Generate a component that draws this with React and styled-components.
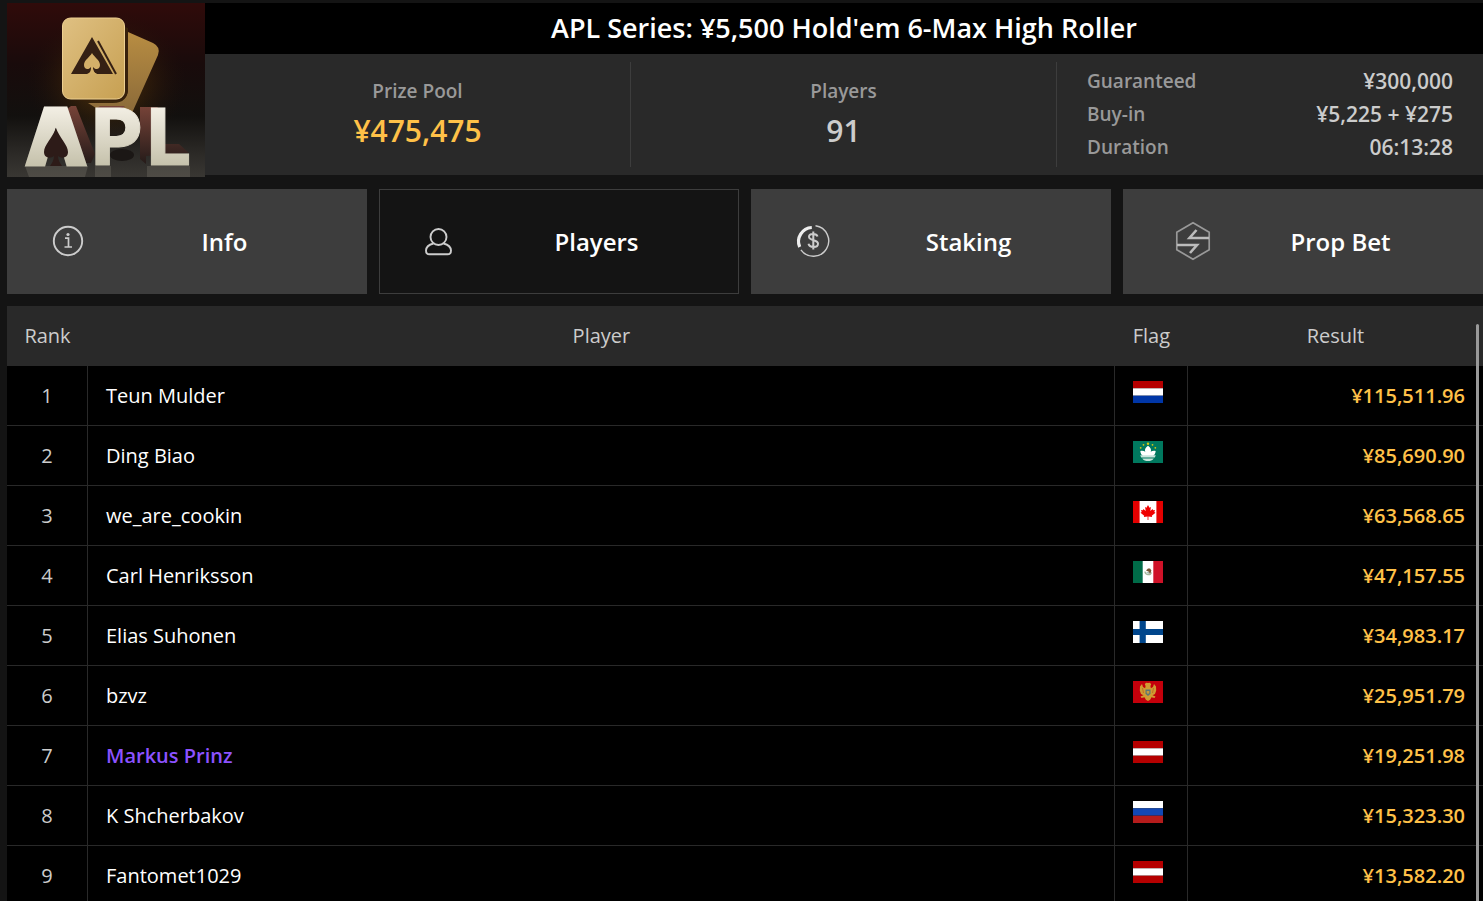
import React from 'react';
import styled, { createGlobalStyle } from 'styled-components';

const GlobalStyle = createGlobalStyle`
  * {
    box-sizing: border-box;
  }

  body {
    margin: 0;
    background: #141414;
    color: #fff;
    font-family: 'Open Sans', 'Noto Sans', sans-serif;
  }
`;

const Page = styled.main`
  display: flex;
  flex-direction: column;
  gap: 12px;
  height: 100vh;
  padding: 3px 0 0 7px;
  overflow: hidden;
`;

const Header = styled.header`
  display: flex;
  align-items: flex-start;
  flex-shrink: 0;
`;

const Logo = styled.svg`
  display: block;
  flex-shrink: 0;
  width: 198px;
  height: 174px;
  overflow: visible;
`;

const Summary = styled.div`
  flex: 1;
`;

const Title = styled.h1`
  margin: 0;
  padding-bottom: 1px;
  background: #000;
  font-size: 27px;
  font-weight: 600;
  line-height: 50px;
  text-align: center;
`;

const Stats = styled.div`
  display: grid;
  grid-template-columns: repeat(3, 1fr);
  padding: 8px 0;
  background: #292929;
`;

const Stat = styled.div`
  display: flex;
  flex-direction: column;
  align-items: center;
  justify-content: center;
  height: 105px;
  padding-bottom: 3px;
  border-right: 1px solid #3d3d3d;
`;

const StatLabel = styled.span`
  color: #999;
  font-size: 19px;
  font-weight: 600;
  line-height: 36px;
`;

const StatValue = styled.span`
  color: ${props => (props.$gold ? '#ffc148' : '#ccc')};
  font-size: 30px;
  font-weight: 600;
  line-height: 44px;
`;

const Details = styled.dl`
  display: flex;
  flex-direction: column;
  justify-content: center;
  margin: 0;
  padding: 0 30px;
`;

const Detail = styled.div`
  display: flex;
  justify-content: space-between;
  font-weight: 600;
  line-height: 33px;
`;

const DetailName = styled.dt`
  color: #999;
  font-size: 19px;
`;

const DetailValue = styled.dd`
  margin: 0;
  color: #ccc;
  font-size: 21px;
`;

const Tabs = styled.nav`
  display: grid;
  grid-template-columns: repeat(4, 1fr);
  gap: 12px;
  flex-shrink: 0;
`;

const Tab = styled.button`
  display: flex;
  align-items: center;
  height: 105px;
  padding: 0;
  border: 1px solid #3d3d3d;
  background: ${props => (props.$active ? '#141414' : '#3d3d3d')};
  color: #fff;
  font-family: inherit;
  font-size: 24px;
  font-weight: 600;
  cursor: pointer;
`;

const TabIcon = styled.svg`
  width: 54px;
  height: 48px;
  margin: 0 0 0 38px;
  fill: none;
  stroke: #ccc;
`;

const TabLabel = styled.span`
  flex: 1;
  margin-right: 17px;
  text-align: center;
`;

const Results = styled.section`
  position: relative;
  flex: 1;
  min-height: 0;
  overflow: hidden;
`;

const Scrollbar = styled.div`
  position: absolute;
  top: 18px;
  right: 4px;
  bottom: 0;
  width: 3px;
  border-radius: 2px 2px 0 0;
  background: #999;
`;

const Table = styled.table`
  width: 100%;
  border-collapse: separate;
  border-spacing: 0;
  table-layout: fixed;
  font-size: 20px;
`;

const Th = styled.th`
  width: ${props => props.$width || 'auto'};
  height: 60px;
  padding: 0 0 2px;
  background: #292929;
  color: #ccc;
  font-weight: 400;
  text-align: center;
`;

const Td = styled.td`
  height: 60px;
  padding: 0 18px;
  border-right: 1px solid #292929;
  border-bottom: 1px solid #292929;
  background: #000;

  &:last-child {
    border-right: 0;
  }
`;

const RankCell = styled(Td)`
  color: #ccc;
  text-align: center;
`;

const PlayerCell = styled(Td)`
  color: ${props => (props.$highlight ? '#8c52ff' : '#fff')};
  font-weight: ${props => (props.$highlight ? 600 : 400)};
`;

const FlagCell = styled(Td)`
  padding-bottom: 7px;
`;

const ResultCell = styled(Td)`
  color: #ffc148;
  font-weight: 600;
  text-align: right;
`;

const FlagImage = styled.svg`
  display: block;
  width: 30px;
  height: 22px;
`;

const players = [
  { name: 'Teun Mulder', country: 'nl', result: '¥115,511.96' },
  { name: 'Ding Biao', country: 'mo', result: '¥85,690.90' },
  { name: 'we_are_cookin', country: 'ca', result: '¥63,568.65' },
  { name: 'Carl Henriksson', country: 'mx', result: '¥47,157.55' },
  { name: 'Elias Suhonen', country: 'fi', result: '¥34,983.17' },
  { name: 'bzvz', country: 'me', result: '¥25,951.79' },
  { name: 'Markus Prinz', country: 'at', result: '¥19,251.98', highlight: true },
  { name: 'K Shcherbakov', country: 'ru', result: '¥15,323.30' },
  { name: 'Fantomet1029', country: 'at', result: '¥13,582.20' },
];

const stripes = (top, middle, bottom) => (
  <React.Fragment>
    <path d="M0 0h30v7.3H0z" fill={top} />
    <path d="M0 7.3h30v7.4H0z" fill={middle} />
    <path d="M0 14.7h30V22H0z" fill={bottom} />
  </React.Fragment>
);

const flags = {
  nl: stripes('#b50000', '#fff', '#0036a7'),
  at: stripes('#b50000', '#fff', '#b50000'),
  ru: stripes('#fff', '#1248b5', '#b51c1c'),
  fi: (
    <React.Fragment>
      <path d="M0 0h30v22H0z" fill="#fff" />
      <path d="M6.6 0h6.2v22H6.600zM0 8h30v6H0z" fill="#00468c" />
    </React.Fragment>
  ),
  mx: (
    <React.Fragment>
      <path d="M0 0h30v22H0z" fill="#fff" />
      <path d="M0 0h9.700v22H0z" fill="#006b48" />
      <path d="M20.300 0H30v22h-9.700z" fill="#cf1228" />
      <path d="M12 10.500c0 3.500 5.500 4.500 6.300.8" fill="none" stroke="#a5b79a" strokeWidth="1.300" />
      <path d="M13 9.500l2-2h2l1.400 2-.8 2.400-2 .8.300-2z" fill="#765432" />
      <path d="M13.500 11.300h3v1h-3z" fill="#88a9a0" />
    </React.Fragment>
  ),
  ca: (
    <React.Fragment>
      <path d="M0 0h30v22H0z" fill="#fff" />
      <path d="M0 0h6.600v22H0zM23.400 0H30v22h-6.600z" fill="#e40000" />
      <path
        d="M15 4l1.500 2.700 1.400-.7-.6 4 2.300-2 .5 1.200 1.900-.2-.7 2 1.200.8-3.700 3 .3 1.200-3.700-.4V19h-.8v-3.400l-3.700.4.300-1.200-3.700-3 1.200-.8-.7-2 1.900.2.500-1.200 2.300 2-.6-4 1.400.7z"
        fill="#f00000"
      />
    </React.Fragment>
  ),
  mo: (
    <React.Fragment>
      <path d="M0 0h30v22H0z" fill="#00785e" />
      <path
        d="M15 4.800c-2.800 2-3.600 3.800-2.700 6-1.300-1-3.100-1.200-5-.8.300 2.500 1.200 4.200 3 5.200h9.400c1.800-1 2.700-2.700 3-5.200-1.900-.4-3.700-.2-5 .8.900-2.200.1-4-2.700-6z"
        fill="#fff"
      />
      <path d="M7.200 14.200h15.600l-1 2.300H8.200zM9.200 17.400h11.600c-2.600 3.600-9 3.600-11.600 0z" fill="#c9e4dc" />
      <g fill="#d8ca12">
        <circle cx="15" cy="2.800" r="1.200" />
        <circle cx="10.500" cy="3.800" r=".9" />
        <circle cx="19.500" cy="3.800" r=".9" />
        <circle cx="7.700" cy="6.800" r=".9" />
        <circle cx="22.300" cy="6.800" r=".9" />
      </g>
    </React.Fragment>
  ),
  me: (
    <React.Fragment>
      <path d="M0 0h30v22H0z" fill="#c4000b" />
      <path
        d="M15 2l2-.3 1.200 1.500-.8 1.800.5 2.300L20 6l1-3 2 2.500.2 4-1.200 3.500-2.500 1.200 3 1.300-1 1.500-3-.8-1.400 2.500L15 20l-2.100-1.300-1.400-2.500-3 .8-1-1.500 3-1.300L8 13 6.800 9.500l.2-4L9 3l1 3 2.100 1.300.5-2.300-.8-1.800L13 1.700z"
        fill="#cf9c32"
      />
      <path d="M12.500 8.500h5v4.200L15 15l-2.500-2.300z" fill="#5c7774" />
      <path d="M13.700 10h2.600v2l-1.300 1-1.300-1z" fill="#c79b3d" />
      <path d="M9.500 7l1 5M20.500 7l-1 5" stroke="#b4531d" strokeWidth=".6" />
    </React.Fragment>
  ),
};

const countryNames = {
  nl: 'Netherlands',
  mo: 'Macao',
  ca: 'Canada',
  mx: 'Mexico',
  fi: 'Finland',
  me: 'Montenegro',
  at: 'Austria',
  ru: 'Russia',
};

const Flag = props => (
  <FlagImage viewBox="0 0 30 22" role="img" aria-label={countryNames[props.country]}>
    {flags[props.country]}
  </FlagImage>
);

const tabs = [
  {
    label: 'Info',
    icon: (
      <React.Fragment>
        <circle cx="22" cy="23" r="14.200" strokeWidth="1.900" />
        <path d="M19 20.200h3.500v8.500M18.500 29h7.500" strokeWidth="1.700" />
        <circle cx="22" cy="16.500" r="1.600" fill="#ccc" stroke="none" />
      </React.Fragment>
    ),
  },
  {
    label: 'Players',
    active: true,
    icon: (
      <React.Fragment>
        <circle cx="20.500" cy="19" r="8" strokeWidth="1.900" />
        <path
          d="M15.500 25.500c-4 1.100-7.500 3.300-7.500 7 0 2.500 1.200 3.800 3.500 3.800h18c2.300 0 3.500-1.300 3.500-3.800 0-3.700-3.500-5.900-7.500-7"
          strokeWidth="1.900"
        />
      </React.Fragment>
    ),
  },
  {
    label: 'Staking',
    icon: (
      <React.Fragment>
        <path d="M9.700 29A14 14 0 0 1 21.800 9.500" stroke="#eee" strokeWidth="3.200" />
        <path d="M25.500 7.800a15.300 15.300 0 1 1-14.600 24" strokeWidth="1.400" />
        <path
          d="M27.500 18.500c-1-3.500-8.500-3.500-8.500.3 0 4.400 9 2.500 9 7 0 4.200-8.500 4.300-9.500 0M23.300 13.500v18"
          strokeWidth="2"
        />
      </React.Fragment>
    ),
  },
  {
    label: 'Prop Bet',
    icon: (
      <React.Fragment>
        <path d="M31 4.800l16.200 9.400v17.600L31 41.200l-16.200-9.400V14.200z" stroke="#999" strokeWidth="1.700" />
        <path d="M47 20H27.500l7-8M15 27h20l-7 8" stroke="#bbb" strokeWidth="2.600" />
      </React.Fragment>
    ),
  },
];

const AplLogo = () => (
  <Logo viewBox="0 0 198 174" role="img" aria-label="APL">
    <defs>
      <linearGradient id="backdrop" x1="0" y1="0" x2="0" y2="1">
        <stop offset="0" stopColor="#300b0a" />
        <stop offset=".35" stopColor="#190b0b" />
        <stop offset=".65" stopColor="#12100e" />
        <stop offset=".85" stopColor="#2a2825" />
        <stop offset="1" stopColor="#393733" />
      </linearGradient>
      <radialGradient id="glow">
        <stop offset="0" stopColor="#7c500c" stopOpacity=".7" />
        <stop offset=".5" stopColor="#4c2d08" stopOpacity=".4" />
        <stop offset="1" stopColor="#20100a" stopOpacity="0" />
      </radialGradient>
      <linearGradient id="card" x1="0" y1="0" x2="1" y2="1">
        <stop offset="0" stopColor="#dfc082" />
        <stop offset="1" stopColor="#c7a052" />
      </linearGradient>
      <linearGradient id="backCard" x1="0" y1="0" x2="0" y2="1">
        <stop offset="0" stopColor="#b88d42" />
        <stop offset="1" stopColor="#8b6a39" />
      </linearGradient>
      <linearGradient id="letters" gradientUnits="userSpaceOnUse" x1="0" y1="105" x2="0" y2="162">
        <stop offset="0" stopColor="#f2eee3" />
        <stop offset="1" stopColor="#c6c2ac" />
      </linearGradient>
      <linearGradient id="sides" x1="0" y1="0" x2="0" y2="1">
        <stop offset="0" stopColor="#774338" />
        <stop offset="1" stopColor="#251b19" />
      </linearGradient>
    </defs>
    <path d="M0 0h198v174H0z" fill="url(#backdrop)" />
    <ellipse cx="100" cy="78" rx="80" ry="70" fill="url(#glow)" />
    <path d="M121 29l25 11q8 4 5 12l-26 58H97L81 100h25q15 0 15-15z" fill="url(#backCard)" />
    <path d="M61 98h48q12 0 12-12V25l-3-1v60q0 13-13 13z" fill="#37200b" />
    <rect x="55.500" y="15" width="62" height="81" rx="8" fill="url(#card)" stroke="#edcf91" />
    <path d="M85 34l21 37H90q-3-1-4-5-1 4-4 5H64z" fill="#352014" />
    <path d="M85 50c-2 4-8 7-8 12 0 5 5 5 7 2 0 4-1 6-4 7h10c-3-1-4-3-4-7 2 3 7 3 7-2 0-5-6-8-8-12z" fill="#d5b069" />
    <path d="M91 38l18 33" stroke="#352014" strokeWidth="2" />
    {/* sides of the block letters */}
    <path d="M60 106l4-3h5l19 48-4 9H70zM89 106l4-3h25l-8 8zM139 161l-6-5v-52h17l4 3v34h18l10 9-43 3z" fill="url(#sides)" />
    <ellipse cx="115" cy="152" rx="12" ry="6" fill="#1b1715" />
    <g
      fill="url(#letters)"
      stroke="url(#letters)"
      strokeWidth="1"
      fontFamily="Inter"
      fontSize="78"
      fontWeight="800"
      textAnchor="middle"
    >
      <text x="49" y="162" fontWeight="900" strokeWidth="3">A</text>
      <text x="110" y="162">P</text>
      <text x="162" y="162">L</text>
    </g>
    <path d="M49 125c-3 9-12 17-12 24 0 6 6 7 10 4 0 4-2 7-4 10h12c-2-3-4-6-4-10 4 3 10 2 10-4 0-7-9-15-12-24z" fill="#2d1b18" />
    <path d="M18 163h63l-3 11H22zM88 163h16v11H88zM140 163h43v11h-43z" fill="#8e8b81" opacity=".25" />
  </Logo>
);

const App = () => (
  <React.Fragment>
    <GlobalStyle />
    <Page>
      <Header>
        <AplLogo />
        <Summary>
          <Title>APL Series: ¥5,500 Hold'em 6-Max High Roller</Title>
          <Stats>
            <Stat>
              <StatLabel>Prize Pool</StatLabel>
              <StatValue $gold>¥475,475</StatValue>
            </Stat>
            <Stat>
              <StatLabel>Players</StatLabel>
              <StatValue>91</StatValue>
            </Stat>
            <Details>
              <Detail>
                <DetailName>Guaranteed</DetailName>
                <DetailValue>¥300,000</DetailValue>
              </Detail>
              <Detail>
                <DetailName>Buy-in</DetailName>
                <DetailValue>¥5,225 + ¥275</DetailValue>
              </Detail>
              <Detail>
                <DetailName>Duration</DetailName>
                <DetailValue>06:13:28</DetailValue>
              </Detail>
            </Details>
          </Stats>
        </Summary>
      </Header>

      <Tabs>
        {tabs.map(tab => (
          <Tab key={tab.label} type="button" $active={tab.active}>
            <TabIcon viewBox="0 0 54 48" aria-hidden="true">{tab.icon}</TabIcon>
            <TabLabel>{tab.label}</TabLabel>
          </Tab>
        ))}
      </Tabs>

      <Results>
        <Table>
          <thead>
            <tr>
              <Th $width="81px">Rank</Th>
              <Th>Player</Th>
              <Th $width="73px">Flag</Th>
              <Th $width="20%">Result</Th>
            </tr>
          </thead>
          <tbody>
            {players.map((player, index) => (
              <tr key={player.name}>
                <RankCell>{index + 1}</RankCell>
                <PlayerCell $highlight={player.highlight}>{player.name}</PlayerCell>
                <FlagCell>
                  <Flag country={player.country} />
                </FlagCell>
                <ResultCell>{player.result}</ResultCell>
              </tr>
            ))}
          </tbody>
        </Table>
        <Scrollbar />
      </Results>
    </Page>
  </React.Fragment>
);

export default App;
